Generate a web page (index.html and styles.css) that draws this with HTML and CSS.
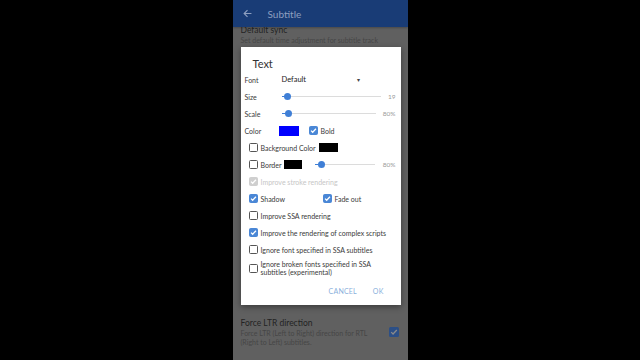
FILE: index.html
```html
<!DOCTYPE html>
<html>
<head>
<meta charset="utf-8">
<link rel="stylesheet" href="styles.css">
</head>
<body>
<div class="phone">
  <div class="appbar">
    <svg class="back" width="9" height="9" viewBox="0 0 16 16"><path d="M15 8H3M8 2L2 8l6 6" fill="none" stroke="#8d9fc0" stroke-width="2"/></svg>
    <span class="apptitle">Subtitle</span>
  </div>
  <div class="prefs">
    <div class="pref top">
      <div class="ptitle">Default sync</div>
      <div class="pdesc">Set default time adjustment for subtitle track</div>
    </div>
    <div class="spacer"></div>
    <div class="pref bottom">
      <div class="ptext">
        <div class="ptitle">Force LTR direction</div>
        <div class="pdesc">Force LTR (Left to Right) direction for RTL (Right to Left) subtitles.</div>
      </div>
      <span class="dimcheck"><svg width="8" height="8" viewBox="0 0 10 10"><path d="M1.5 5.2l2.3 2.3 4.7-5" fill="none" stroke="#8a8a8a" stroke-width="1.6"/></svg></span>
    </div>
  </div>

  <div class="dialog">
    <div class="dtitle">Text</div>
    <div class="row">
      <span class="label">Font</span>
      <span class="select">Default</span>
      <span class="arrow">&#9662;</span>
    </div>
    <div class="row">
      <span class="label">Size</span>
      <div class="slider"><div class="fill" style="width:6px"></div><div class="thumb" style="left:6px"></div></div>
      <span class="val">19</span>
    </div>
    <div class="row">
      <span class="label">Scale</span>
      <div class="slider short"><div class="fill" style="width:7px"></div><div class="thumb" style="left:7px"></div></div>
      <span class="val">80%</span>
    </div>
    <div class="row">
      <span class="label lcolor">Color</span>
      <span class="swatch blue"></span>
      <span class="cb on"><svg width="7" height="7" viewBox="0 0 10 10"><path d="M1.5 5.2l2.3 2.3 4.7-5" fill="none" stroke="#fff" stroke-width="1.8"/></svg></span>
      <span class="cbtext">Bold</span>
    </div>
    <div class="row ind">
      <span class="cb"></span>
      <span class="cbtext">Background Color</span>
      <span class="swatch black bg"></span>
    </div>
    <div class="row ind">
      <span class="cb"></span>
      <span class="cbtext">Border</span>
      <span class="swatch black bd"></span>
      <div class="slider border"><div class="fill" style="width:7px"></div><div class="thumb" style="left:7px"></div></div>
      <span class="val">80%</span>
    </div>
    <div class="row ind disabled">
      <span class="cb dis"><svg width="7" height="7" viewBox="0 0 10 10"><path d="M1.5 5.2l2.3 2.3 4.7-5" fill="none" stroke="#fff" stroke-width="1.8"/></svg></span>
      <span class="cbtext">Improve stroke rendering</span>
    </div>
    <div class="row ind">
      <div class="half">
        <span class="cb on"><svg width="7" height="7" viewBox="0 0 10 10"><path d="M1.5 5.2l2.3 2.3 4.7-5" fill="none" stroke="#fff" stroke-width="1.8"/></svg></span>
        <span class="cbtext">Shadow</span>
      </div>
      <span class="cb on"><svg width="7" height="7" viewBox="0 0 10 10"><path d="M1.5 5.2l2.3 2.3 4.7-5" fill="none" stroke="#fff" stroke-width="1.8"/></svg></span>
      <span class="cbtext">Fade out</span>
    </div>
    <div class="row ind">
      <span class="cb"></span>
      <span class="cbtext">Improve SSA rendering</span>
    </div>
    <div class="row ind">
      <span class="cb on"><svg width="7" height="7" viewBox="0 0 10 10"><path d="M1.5 5.2l2.3 2.3 4.7-5" fill="none" stroke="#fff" stroke-width="1.8"/></svg></span>
      <span class="cbtext">Improve the rendering of complex scripts</span>
    </div>
    <div class="row ind">
      <span class="cb"></span>
      <span class="cbtext">Ignore font specified in SSA subtitles</span>
    </div>
    <div class="row ind tall">
      <span class="cb"></span>
      <span class="cbtext wrap">Ignore broken fonts specified in SSA subtitles (experimental)</span>
    </div>
    <div class="buttons">
      <span class="btn">CANCEL</span>
      <span class="btn">OK</span>
    </div>
  </div>
</div>
</body>
</html>
```
FILE: styles.css
```css
* { box-sizing: border-box; }
html, body { margin: 0; padding: 0; background: #000; }
body { font-family: Lato, "Noto Sans", sans-serif; }
.phone {
  width: 175px; height: 360px; margin: 0 auto; background: #606060;
  position: relative; overflow: hidden;
}
.appbar {
  height: 27px; background: #193c76; display: flex; align-items: center;
  padding-left: 10px; position: relative; z-index: 2;
  box-shadow: 0 1px 2px rgba(0,0,0,0.25);
}
.back { margin-right: 16px; }
.apptitle { color: #8d9fc0; font-size: 10px; }
.prefs { display: flex; flex-direction: column; height: 333px; }
.pref { padding: 0 8px; }
.pref.top { margin-top: -2px; }
.ptitle { color: #232323; font-size: 8.5px; line-height: 11px; }
.pdesc { color: #464646; font-size: 7px; line-height: 8.5px; }
.spacer { flex: 1; }
.pref.bottom { display: flex; align-items: center; padding-bottom: 14px; padding-right: 9px; }
.ptext { flex: 1; padding-right: 12px; }
.dimcheck {
  width: 10px; height: 10px; background: #2c4f86; border-radius: 1.5px;
  display: flex; align-items: center; justify-content: center;
}

.dialog {
  position: absolute; left: 8px; top: 47px; width: 160px; height: 258px;
  background: #fff; box-shadow: 0 2px 6px rgba(0,0,0,0.4);
  padding: 10px 5px 0 4px; z-index: 3;
  color: #3a3a3a; font-size: 7px;
}
.dtitle { font-size: 11px; height: 14px; line-height: 14px; padding-left: 8px; color: #333; }
.row { height: 17px; display: flex; align-items: center; white-space: nowrap; }
.row.ind { padding-left: 4px; }
.label { width: 37px; color: #3a3a3a; }
.label.lcolor { width: 34px; }
.select { width: 75px; color: #222; font-size: 7.5px; }
.arrow { font-size: 6px; color: #444; }
.slider { position: relative; width: 99px; height: 1px; background: #dcdcdc; }
.slider.short { width: 94px; }
.slider.border { width: 60px; margin-left: 13px; }
.fill { position: absolute; left: 0; top: 0; height: 1px; background: #3f7fd6; }
.thumb {
  position: absolute; top: -3px; width: 7px; height: 7px; margin-left: -3.5px;
  border-radius: 50%; background: #3f7fd6;
}
.val { flex: 1; text-align: right; color: #9a9a9a; font-size: 6.5px; }
.swatch { width: 20px; height: 10px; display: inline-block; }
.swatch.blue { background: #0000ff; margin-right: 10px; }
.swatch.black { background: #000; }
.swatch.bg { width: 19px; height: 9px; margin-left: 3px; }
.swatch.bd { width: 18px; height: 9px; margin-left: 2px; }
.cb {
  width: 9px; height: 9px; border: 1.3px solid #555; border-radius: 1.5px;
  display: inline-flex; align-items: center; justify-content: center; flex: none;
}
.cb.on { background: #4a87d6; border-color: #4a87d6; }
.cb.dis { background: #cfcfcf; border-color: #cfcfcf; }
.cbtext { margin-left: 3px; color: #3a3a3a; }
.disabled .cbtext { color: #c6c6c6; }
.half { width: 74px; display: flex; align-items: center; }
.row.tall { height: 20px; align-items: center; }
.cbtext.wrap { white-space: normal; line-height: 8px; width: 120px; }
.buttons { display: flex; justify-content: flex-end; align-items: center; height: 24px; padding-right: 12px; margin-top: 1px; }
.btn { color: #8ab0dc; font-size: 7px; letter-spacing: 0.2px; margin-left: 16px; }
```
